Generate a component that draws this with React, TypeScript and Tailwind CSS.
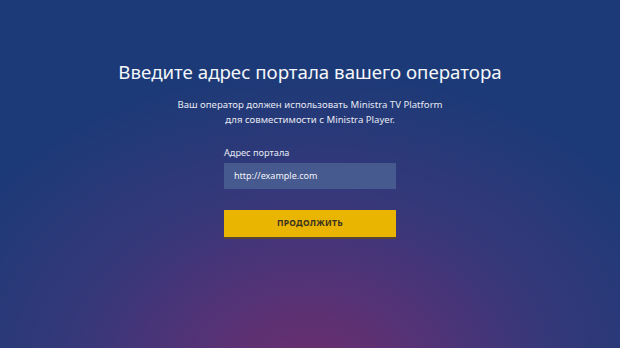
import React from 'react';

const font = { fontFamily: '"Noto Sans", "Open Sans", sans-serif' };

export default function App() {
  return (
    <div
      className="w-[620px] h-[348px] overflow-hidden flex flex-col items-center text-white bg-[#1b3a77] bg-[radial-gradient(ellipse_66%_90%_at_50%_108%,#6e2e6c_0%,#553276_28%,#36387a_58%,#1b3a77_100%)]"
      style={font}
    >
      <h1 className="mt-[57px] text-[18.7px] leading-[30px] text-[#f4f6fa]">
        Введите адрес портала вашего оператора
      </h1>
      <p className="mt-[10px] text-[9.6px] leading-[15px] text-center text-[#e6e9f2]">
        Ваш оператор должен использовать Ministra TV Platform
        <br />
        для совместимости с Ministra Player.
      </p>
      <div className="mt-[19px] w-[172px] flex flex-col">
        <label className="text-[9.2px] leading-[14px] text-[#e6e9f2]">Адрес портала</label>
        <div className="mt-[3px] h-[26px] bg-[#465a8f] flex items-center px-[10px] text-[9px] text-[#f1f3f8]">
          http://example.com
        </div>
        <button className="mt-[21px] h-[27px] bg-[#e9b500] shadow-[0_2px_0_#5a4530] flex items-center justify-center text-[8.5px] font-bold tracking-[0.3px] text-[#3a3320]">
          ПРОДОЛЖИТЬ
        </button>
      </div>
    </div>
  );
}
